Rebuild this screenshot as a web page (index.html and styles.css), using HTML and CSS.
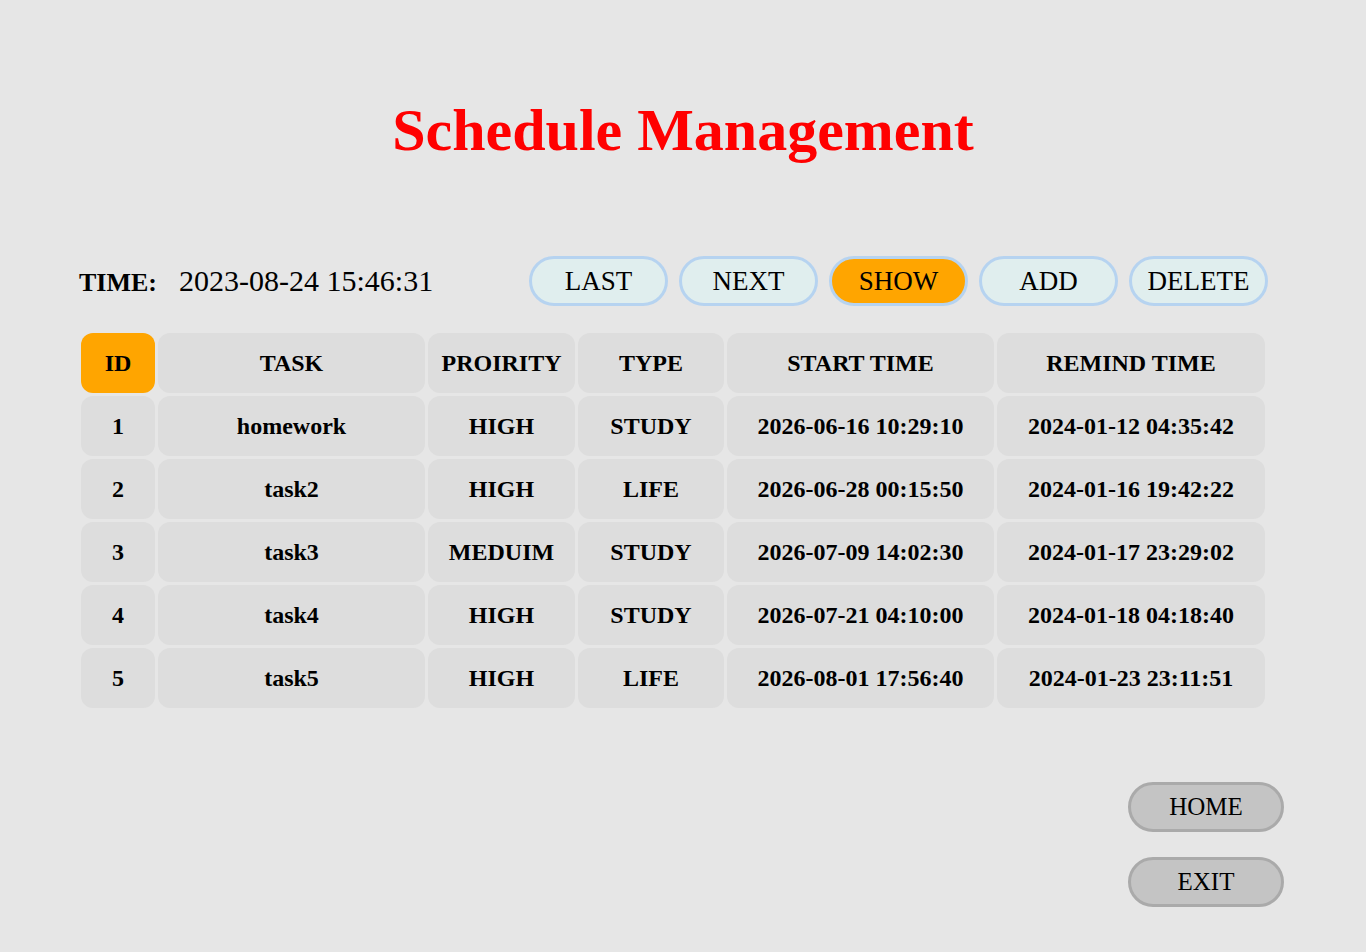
FILE: index.html
```html
<!DOCTYPE html>
<html>
<head>
<meta charset="utf-8">
<title>Schedule Management</title>
<link rel="stylesheet" href="styles.css">
</head>
<body>
<div class="page">
  <h1 class="title">Schedule Management</h1>
  <div class="toolbar">
    <div class="clock">
      <span class="clock-label">TIME:</span>
      <span class="clock-value">2023-08-24 15:46:31</span>
    </div>
    <div class="actions">
      <button class="pill">LAST</button>
      <button class="pill">NEXT</button>
      <button class="pill pill-active">SHOW</button>
      <button class="pill">ADD</button>
      <button class="pill">DELETE</button>
    </div>
  </div>
  <table class="grid">
    <colgroup>
      <col class="c-id"><col class="c-task"><col class="c-pri"><col class="c-type"><col class="c-start"><col class="c-remind">
    </colgroup>
    <thead>
      <tr>
        <th class="cell-active">ID</th><th>TASK</th><th>PROIRITY</th><th>TYPE</th><th>START TIME</th><th>REMIND TIME</th>
      </tr>
    </thead>
    <tbody>
      <tr><td>1</td><td>homework</td><td>HIGH</td><td>STUDY</td><td>2026-06-16 10:29:10</td><td>2024-01-12 04:35:42</td></tr>
      <tr><td>2</td><td>task2</td><td>HIGH</td><td>LIFE</td><td>2026-06-28 00:15:50</td><td>2024-01-16 19:42:22</td></tr>
      <tr><td>3</td><td>task3</td><td>MEDUIM</td><td>STUDY</td><td>2026-07-09 14:02:30</td><td>2024-01-17 23:29:02</td></tr>
      <tr><td>4</td><td>task4</td><td>HIGH</td><td>STUDY</td><td>2026-07-21 04:10:00</td><td>2024-01-18 04:18:40</td></tr>
      <tr><td>5</td><td>task5</td><td>HIGH</td><td>LIFE</td><td>2026-08-01 17:56:40</td><td>2024-01-23 23:11:51</td></tr>
    </tbody>
  </table>
  <div class="nav">
    <button class="nav-btn">HOME</button>
    <button class="nav-btn">EXIT</button>
  </div>
</div>
</body>
</html>
```
FILE: styles.css
```css
html, body {
  margin: 0;
  padding: 0;
  background: #e6e6e6;
}
body {
  font-family: "Liberation Serif", "Times New Roman", serif;
  color: #000;
  width: 1366px;
  height: 952px;
  overflow: hidden;
}
.page {
  padding-top: 96px;
  display: flex;
  flex-direction: column;
}
.title {
  margin: 0;
  font-size: 60px;
  line-height: 69px;
  font-weight: bold;
  color: #ff0000;
  text-align: center;
}
.toolbar {
  margin: 91px 0 0 79px;
  width: 1189px;
  display: flex;
  align-items: center;
  justify-content: space-between;
}
.clock {
  display: flex;
  align-items: baseline;
  gap: 22px;
}
.clock-label {
  font-weight: bold;
  font-size: 26px;
}
.clock-value {
  font-size: 30px;
}
.actions {
  display: flex;
  gap: 11px;
}
.pill {
  box-sizing: border-box;
  width: 139px;
  height: 50px;
  border: 3px solid #b6d3f0;
  border-radius: 25px;
  background: #e0eeee;
  font-family: "Liberation Serif", "Times New Roman", serif;
  font-size: 27px;
  color: #000;
  padding: 0;
}
.pill-active {
  background: #ffa500;
}
.grid {
  margin: 24px 0 0 78px;
  border-collapse: separate;
  border-spacing: 3px;
  table-layout: fixed;
  width: 1190px;
}
.c-id { width: 74px; }
.c-task { width: 267px; }
.c-pri { width: 147px; }
.c-type { width: 146px; }
.c-start { width: 267px; }
.c-remind { width: 268px; }
.grid th, .grid td {
  height: 60px;
  padding: 0;
  background: #dddddd;
  border-radius: 12px;
  text-align: center;
  vertical-align: middle;
  font-weight: bold;
  font-size: 24px;
  white-space: nowrap;
}
.grid th.cell-active {
  background: #ffa500;
}
.nav {
  margin: 71px 0 0 1128px;
  display: flex;
  flex-direction: column;
  gap: 25px;
}
.nav-btn {
  box-sizing: border-box;
  width: 156px;
  height: 50px;
  border: 3px solid #aaaaaa;
  border-radius: 25px;
  background: #c4c4c4;
  font-family: "Liberation Serif", "Times New Roman", serif;
  font-size: 25px;
  color: #000;
  padding: 0;
}
```
